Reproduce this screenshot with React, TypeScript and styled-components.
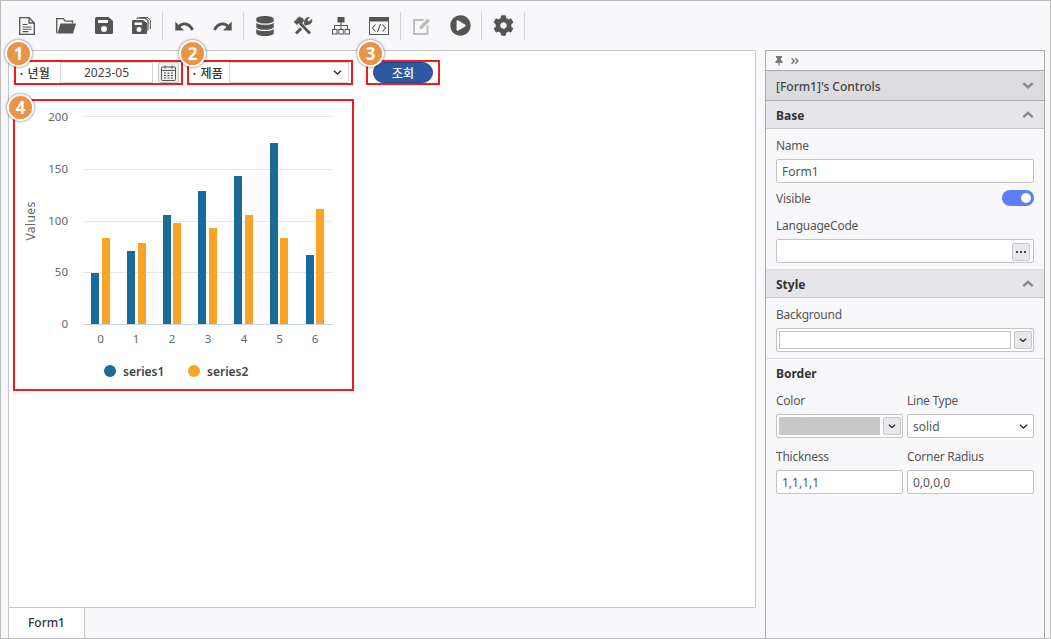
import React from "react";
import styled, { createGlobalStyle } from "styled-components";
import { FaDatabase, FaPlayCircle, FaCog, FaThumbtack, FaAngleDoubleRight } from "react-icons/fa";

const Global = createGlobalStyle`
  html, body { margin: 0; padding: 0; width: 1051px; height: 639px; overflow: hidden; background: #fff; }
  * { box-sizing: border-box; }
  body { font-family: "Noto Sans", "Noto Sans CJK KR", sans-serif; color: #444; }
`;
const Frame = styled.div`
  width: 1051px; height: 639px; border: 1px solid #bcbcbc; background: #f8f8fb;
  display: flex; flex-direction: column; overflow: hidden;
`;
const Toolbar = styled.div`
  height: 49px; flex: none; display: flex; align-items: center; padding: 0 0 0 7px; color: #555;
`;
const ToolButton = styled.div<{ $w?: number; $dim?: boolean }>`
  width: ${p => p.$w ?? 38}px; height: 38px; display: flex; align-items: center; justify-content: center;
  color: ${p => (p.$dim ? "#bdbdbd" : "#555")};
`;
const ToolSep = styled.div`
  width: 1px; height: 28px; background: #d4d4d8; margin: 0 2px;
`;
const Main = styled.div`
  flex: 1; min-height: 0; display: flex; padding: 0 5px 0 7px; gap: 9px;
`;
const DesignColumn = styled.div`
  width: 749px; display: flex; flex-direction: column;
`;
const Canvas = styled.div`
  flex: 1; min-height: 0; background: #fff; border: 1px solid #c8c8c8; border-bottom: 0; padding: 9px 0 0 4px;
`;
const FilterRow = styled.div`
  display: flex; align-items: flex-start; margin-left: 0;
`;
const Marked = styled.div<{ $w: number; $h: number; $ml?: number; $mt?: number }>`
  position: relative; width: ${p => p.$w}px; height: ${p => p.$h}px; border: 2px solid #ed1c24;
  margin-left: ${p => p.$ml ?? 0}px; margin-top: ${p => p.$mt ?? 0}px;
  display: flex; align-items: center; flex: none;
`;
const Badge = styled.div<{ $l: number; $t: number }>`
  position: absolute; left: ${p => p.$l}px; top: ${p => p.$t}px; width: 27px; height: 27px; border-radius: 50%;
  background: #ea9448; border: 2px solid #fff; box-shadow: 0 0 2px 1px rgba(0,0,0,.3);
  color: #fff; font: 700 17px/23px "Noto Sans", sans-serif; text-align: center; z-index: 2;
`;
const FieldLabel = styled.div<{ $w: number }>`
  width: ${p => p.$w}px; flex: none; font-size: 12px; color: #333; padding-left: 2px; font-weight: 500; white-space: nowrap;
  font-family: "Noto Sans CJK KR", sans-serif;
`;
const DateBox = styled.div`
  width: 93px; height: 21px; border: 1px solid #d6d6d6; flex: none; font-size: 12px; color: #444;
  text-align: center; line-height: 19px; background: #fff;
`;
const CalButton = styled.div`
  width: 21px; height: 21px; margin-left: 5px; border: 1px solid #ccc; border-radius: 2px; background: #eee; flex: none;
  display: flex; align-items: center; justify-content: center;
`;
const ComboBox = styled.div`
  width: 120px; height: 21px; border: 1px solid #d6d6d6; background: #fff; flex: none; display: flex; align-items: center; justify-content: flex-end; padding-right: 6px;
`;
const SearchButton = styled.div`
  width: 60px; height: 21px; margin-left: 5px; border-radius: 11px; background: #2c59a0; border: 1px solid #1f4585;
  color: #fff; font: 500 12px/19px "Noto Sans CJK KR", sans-serif; text-align: center;
`;
const TabBar = styled.div`
  height: 31px; flex: none; border: 1px solid #c8c8c8; border-width: 1px 0 0 1px; display: flex;
`;
const Tab = styled.div`
  width: 76px; background: #fff; border-right: 1px solid #c8c8c8; font-size: 12px; font-weight: 500; color: #333; text-align: center; line-height: 30px;
`;
const Panel = styled.div`
  width: 280px; border: 1px solid #ababab; border-bottom: 0; background: #f8f8fb; display: flex; flex-direction: column;
`;
const PinRow = styled.div`
  height: 19px; flex: none; display: flex; align-items: center; gap: 6px; padding-left: 8px; color: #777;
`;
const ControlsHead = styled.div`
  height: 31px; flex: none; background: #dcdce0; border-top: 1px solid #ababab; border-bottom: 1px solid #ababab;
  display: flex; align-items: center; justify-content: space-between; padding: 1px 10px 0 10px; font-size: 12px; font-weight: 500; color: #444;
`;
const SectionHead = styled.div`
  height: 28px; flex: none; background: #e6e6ea; border-bottom: 1px solid #c8c8c8;
  display: flex; align-items: center; justify-content: space-between; padding: 1px 10px 0 10px; font-size: 12px; font-weight: 700; color: #333;
`;
const SectionBody = styled.div<{ $pt?: number }>`
  padding: ${p => p.$pt ?? 8}px 10px 6px; display: flex; flex-direction: column;
`;
const PropLabel = styled.div`
  font-size: 12px; height: 16px; line-height: 18px; color: #555; margin-bottom: 6px; letter-spacing: -.25px;
`;
const TextBox = styled.div`
  height: 24px; background: #fff; border: 1px solid #c4c4c4; border-radius: 2px; font-size: 12px; line-height: 22px; color: #555; padding: 1px 5px 0;
  display: flex; align-items: center; justify-content: space-between;
`;
const ToggleRow = styled.div`
  display: flex; justify-content: space-between; align-items: center; height: 16px; margin: 7px 0 11px; font-size: 12px; color: #555; letter-spacing: -.25px;
`;
const Toggle = styled.div`
  width: 32px; height: 16px; border-radius: 8px; background: #5f7cfb; position: relative;
  &::after { content: ""; position: absolute; right: 3px; top: 3px; width: 10px; height: 10px; border-radius: 50%; background: #fff; }
`;
const MiniButton = styled.div<{ $mr?: number }>`
  width: 18px; height: 18px; background: #e8e8ec; border: 1px solid #c8c8c8; border-radius: 2px; display: flex; align-items: center; justify-content: center;
  color: #444; flex: none; margin-right: ${p => p.$mr ?? 0}px;
`;
const PickerBox = styled.div`
  height: 24px; border: 1px solid #c4c4c4; border-radius: 2px; background: #fff; display: flex; align-items: center; padding: 0 1px 0 2px; gap: 3px;
`;
const Swatch = styled.div<{ $c: string; $line: string }>`
  flex: 1; height: 18px; background: ${p => p.$c}; border: 1px solid ${p => p.$line};
`;
const Divider = styled.div`
  height: 1px; background: #dedee2; flex: none;
`;
const BorderTitle = styled.div`
  font-size: 12px; font-weight: 700; color: #333; height: 16px; line-height: 18px; margin-bottom: 11px;
`;
const TwoCol = styled.div<{ $mb?: number }>`
  display: grid; grid-template-columns: 127px 127px; column-gap: 4px; margin-bottom: ${p => p.$mb ?? 0}px;
`;

const Chev = ({ up, size = 12, w = 2.8, c = "#888" }: { up?: boolean; size?: number; w?: number; c?: string }) => (
  <svg width={size} height={size * 0.6} viewBox="0 0 14 8" fill="none" stroke={c} strokeWidth={w}>
    <path d={up ? "M1.5 7L7 2l5.5 5" : "M1.5 1L7 6l5.5-5"} />
  </svg>
);
const Dots = () => (
  <svg width="10" height="2" viewBox="0 0 10 2" fill="#444">
    <rect x="0" width="2" height="2" /><rect x="4" width="2" height="2" /><rect x="8" width="2" height="2" />
  </svg>
);
const FileIcon = () => (
  <svg width="16" height="18" viewBox="0 0 16 18" fill="none" stroke="#555" strokeWidth="1.300">
    <path d="M.7.7h9.300l5.300 5.300v11.300H.7z" />
    <path d="M10 .7V6h5.300" />
    <path d="M3.500 7.500h5M3.500 10h9M3.500 12.300h9M3.500 14.600h6" strokeWidth="1.100" />
  </svg>
);
const FolderIcon = () => (
  <svg width="20" height="16" viewBox="0 0 20 16">
    <path d="M.7 15.300V.7h6.500l2 2.500h7.300v2" fill="none" stroke="#555" strokeWidth="1.300" />
    <path d="M4.500 5.500H20l-3 10H1.500z" fill="#555" />
  </svg>
);
const SaveIcon = () => (
  <svg width="18" height="17" viewBox="0 0 18 17" fill="#555">
    <path fillRule="evenodd" d="M1.500 0h12L18 4v11.500a1.500 1.500 0 0 1-1.500 1.500h-15A1.500 1.500 0 0 1 0 15.500v-14A1.500 1.500 0 0 1 1.500 0zM3 3v3h10V3zM9 9a3 3 0 1 0 0 6 3 3 0 0 0 0-6z" />
  </svg>
);
const SaveAllIcon = () => (
  <svg width="19" height="17" viewBox="0 0 19 17" fill="#555">
    <path fillRule="evenodd" d="M1 3h10l4 3v10a1 1 0 0 1-1 1H1a1 1 0 0 1-1-1V4a1 1 0 0 1 1-1zM2.500 5.500V8H10V5.500zM7 10a2.500 2.500 0 1 0 0 5 2.500 2.500 0 0 0 0-5z" />
    <path d="M4.500 1.200h8.500l3 2.300v10" fill="none" stroke="#555" strokeWidth="1.200" />
    <path d="M7.500.5h8l2.800 2.500v9" fill="none" stroke="#555" strokeWidth="1" />
  </svg>
);
const UndoIcon = ({ flip }: { flip?: boolean }) => (
  <svg width="19" height="10" viewBox="0 0 19 10" style={flip ? { transform: "scaleX(-1)" } : undefined}>
    <path d="M3.500 6C7 1.500 14 1.500 17.500 9" fill="none" stroke="#555" strokeWidth="2.800" />
    <path d="M.3.500v9H9z" fill="#555" />
  </svg>
);
const ToolsIcon = () => (
  <svg width="20" height="19" viewBox="0 0 20 19" fill="none" stroke="#555">
    <path d="M3 17.500L14 6.500" strokeWidth="3" />
    <path d="M18.800 3.300a4.200 4.200 0 0 1-5.600 5L11.500 6.500a4.200 4.200 0 0 1 5-5L14 4l1.800 1.800z" fill="#555" strokeWidth=".6" />
    <path d="M16.500 17.500L7 7.500" stroke="#f8f8fb" strokeWidth="5" />
    <path d="M17 17.500L7 7" strokeWidth="2.800" />
    <path d="M1 6l5-5.300 4 1.800 1 2.200L7.500 8.500 6 6.800 4 8.800z" fill="#555" strokeWidth=".4" />
  </svg>
);
const SitemapIcon = () => (
  <svg width="18" height="18" viewBox="0 0 18 18" fill="none" stroke="#555">
    <rect x="5.500" y="0" width="7" height="5.500" fill="#555" stroke="none" />
    <path d="M9 5v7M2.500 12V8.500h13V12" />
    <rect x=".5" y="12.500" width="4.500" height="4.500" /><rect x="6.750" y="12.500" width="4.500" height="4.500" /><rect x="13" y="12.500" width="4.500" height="4.500" />
  </svg>
);
const CodeIcon = () => (
  <svg width="20" height="18" viewBox="0 0 20 18" fill="none" stroke="#555">
    <rect x=".5" y=".5" width="19" height="17" />
    <rect x="0" y="0" width="20" height="4" fill="#555" />
    <path d="M6.500 7.500l-3 3.500 3 3.500M13.500 7.500l3 3.500-3 3.500M11.500 7l-3 8" strokeWidth="1.100" />
  </svg>
);
const EditIcon = () => (
  <svg width="18" height="18" viewBox="0 0 18 18" fill="none" stroke="#bdbdbd">
    <path d="M10.500 3H1v14h13.500V8.500" strokeWidth="1.900" />
    <path d="M6.500 9.500L14.500 1.500l2.500 2.500-8 8H6.500z" fill="#bdbdbd" stroke="none" />
  </svg>
);
const CalIcon = () => (
  <svg width="15" height="16" viewBox="0 0 15 16" fill="none" stroke="#555">
    <rect x=".5" y="2" width="14" height="13.500" rx="1" />
    <path d="M.5 5.500h14M4 .5v3M11 .5v3" />
    <path d="M3 8h2M6.500 8h2M10 8h2M3 10.500h2M6.500 10.500h2M10 10.500h2M3 13h2M6.500 13h2M10 13h2" strokeWidth="1.200" />
  </svg>
);

const blue = [[91, 273], [127, 251], [163, 215], [198, 191], [234, 176], [270, 143], [306, 255]];
const orange = [[102, 238], [138, 243], [173, 223], [209, 228], [245, 215], [280, 238], [316, 209]];
const grid = [[116, "200", 121], [169, "150", 173], [221, "100", 225], [272, "50", 276]] as const;
const xticks = [100.5, 136, 172, 208, 244, 279.5, 315];

const OX = 15, OY = 101;
const Chart = () => (
  <svg width="337" height="288" viewBox={`${OX} ${OY} 337 288`} fontFamily="'Noto Sans', sans-serif" fontSize="11.500" fill="#666">
    {grid.map(([y, t, ly]) => (
      <g key={t}>
        <line x1="83" x2="333" y1={y + 0.5} y2={y + 0.5} stroke="#e6e6e6" />
        <text x="68" y={ly} textAnchor="end">{t}</text>
      </g>
    ))}
    <text x="68" y="328" textAnchor="end">0</text>
    {blue.map(([x, y]) => <rect key={x} x={x} y={y} width="8" height={324 - y} fill="#1a6a9a" />)}
    {orange.map(([x, y]) => <rect key={x} x={x} y={y} width="8" height={324 - y} fill="#f9a427" />)}
    <line x1="83" x2="333" y1="324.500" y2="324.500" stroke="#ccd6eb" />
    {xticks.map((x, i) => <text key={x} x={x} y="343" textAnchor="middle">{i}</text>)}
    <text transform="translate(35 221) rotate(-90)" textAnchor="middle" letterSpacing=".4" fontSize="12">Values</text>
    <circle cx="110" cy="371" r="6" fill="#1a6a9a" />
    <text x="123" y="376" fontSize="12" fontWeight="600" fill="#444">series1</text>
    <circle cx="194" cy="371" r="6" fill="#f9a427" />
    <text x="207" y="376" fontSize="12" fontWeight="600" fill="#444">series2</text>
  </svg>
);

export default function App() {
  return (
    <>
      <Global />
      <Frame>
        <Toolbar>
          <ToolButton><FileIcon /></ToolButton>
          <ToolButton $w={40}><FolderIcon /></ToolButton>
          <ToolButton $w={36}><SaveIcon /></ToolButton>
          <ToolButton><SaveAllIcon /></ToolButton>
          <ToolSep />
          <ToolButton><UndoIcon /></ToolButton>
          <ToolButton><UndoIcon flip /></ToolButton>
          <ToolSep />
          <ToolButton><FaDatabase size={20} /></ToolButton>
          <ToolButton><ToolsIcon /></ToolButton>
          <ToolButton><SitemapIcon /></ToolButton>
          <ToolButton><CodeIcon /></ToolButton>
          <ToolSep />
          <ToolButton><EditIcon /></ToolButton>
          <ToolButton><FaPlayCircle size={21} /></ToolButton>
          <ToolSep />
          <ToolButton><FaCog size={21} /></ToolButton>
          <ToolSep />
        </Toolbar>
        <Main>
          <DesignColumn>
            <Canvas>
              <FilterRow>
                <Marked $w={169} $h={25} $ml={1}>
                  <Badge $l={-11} $t={-22}>1</Badge>
                  <FieldLabel $w={44}>· 년월</FieldLabel>
                  <DateBox>2023-05</DateBox>
                  <CalButton><CalIcon /></CalButton>
                </Marked>
                <Marked $w={166} $h={25} $ml={4}>
                  <Badge $l={-10} $t={-22}>2</Badge>
                  <FieldLabel $w={40}>· 제품</FieldLabel>
                  <ComboBox><Chev size={9} w={2.4} c="#333" /></ComboBox>
                </Marked>
                <Marked $w={74} $h={25} $ml={13}>
                  <Badge $l={-11} $t={-22}>3</Badge>
                  <SearchButton>조회</SearchButton>
                </Marked>
              </FilterRow>
              <Marked $w={341} $h={292} $mt={14}>
                <Badge $l={-8} $t={-7}>4</Badge>
                <Chart />
              </Marked>
            </Canvas>
            <TabBar><Tab>Form1</Tab></TabBar>
          </DesignColumn>
          <Panel>
            <PinRow><FaThumbtack size={10} /><FaAngleDoubleRight size={10} /></PinRow>
            <ControlsHead>[Form1]'s Controls<Chev /></ControlsHead>
            <SectionHead>Base<Chev up /></SectionHead>
            <SectionBody>
              <PropLabel>Name</PropLabel>
              <TextBox>Form1</TextBox>
              <ToggleRow>Visible<Toggle /></ToggleRow>
              <PropLabel>LanguageCode</PropLabel>
              <TextBox><span /><MiniButton $mr={-2}><Dots /></MiniButton></TextBox>
            </SectionBody>
            <Divider />
            <SectionHead>Style<Chev up /></SectionHead>
            <SectionBody>
              <PropLabel>Background</PropLabel>
              <PickerBox><Swatch $c="#fff" $line="#c4c4c4" /><MiniButton><Chev size={8} w={2.4} c="#333" /></MiniButton></PickerBox>
            </SectionBody>
            <Divider />
            <SectionBody $pt={6}>
              <BorderTitle>Border</BorderTitle>
              <TwoCol $mb={10}>
                <div>
                  <PropLabel>Color</PropLabel>
                  <PickerBox><Swatch $c="#c8c8c8" $line="#c8c8c8" /><MiniButton><Chev size={8} w={2.4} c="#333" /></MiniButton></PickerBox>
                </div>
                <div>
                  <PropLabel>Line Type</PropLabel>
                  <TextBox>solid<Chev size={9} w={2.4} c="#333" /></TextBox>
                </div>
              </TwoCol>
              <TwoCol>
                <div>
                  <PropLabel>Thickness</PropLabel>
                  <TextBox>1,1,1,1</TextBox>
                </div>
                <div>
                  <PropLabel>Corner Radius</PropLabel>
                  <TextBox>0,0,0,0</TextBox>
                </div>
              </TwoCol>
            </SectionBody>
          </Panel>
        </Main>
      </Frame>
    </>
  );
}
